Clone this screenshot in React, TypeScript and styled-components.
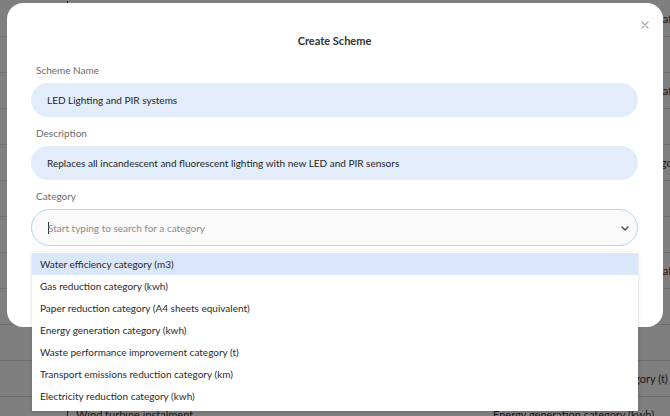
import React from "react";
import styled, { createGlobalStyle } from "styled-components";

const GlobalStyle = createGlobalStyle`
  html, body {
    margin: 0;
    padding: 0;
  }
  body {
    font-family: Lato, "Open Sans", sans-serif;
    background: #fff;
    overflow: hidden;
  }
`;

const Page = styled.div`
  position: relative;
  width: 670px;
  height: 416px;
  overflow: hidden;
  background: #fff;
`;

const Table = styled.div`
  display: flex;
  flex-direction: column;
  padding-top: 1px;
`;

const TableRow = styled.div`
  box-sizing: border-box;
  height: 36px;
  border-bottom: 1px solid #dcdcdc;
  display: grid;
  grid-template-columns: 68px 425px 1fr;
  align-items: center;
  font-size: 11px;
  color: #333;
  white-space: nowrap;
`;

const Gutter = styled.div`
  align-self: stretch;
  border-right: 1px solid #444;
`;

const Cell = styled.div`
  padding-left: 8px;
  overflow: hidden;
`;

const RightCell = styled.div`
  overflow: visible;
`;

const Backdrop = styled.div`
  position: absolute;
  inset: 0;
  background: rgba(0, 0, 0, 0.5);
`;

const Modal = styled.div`
  position: absolute;
  left: 7px;
  top: 3px;
  width: 656px;
  height: 324px;
  box-sizing: border-box;
  padding: 31px 25px 0 24px;
  background: #fff;
  border-radius: 16px;
`;

const Title = styled.div`
  text-align: center;
  font-size: 11px;
  line-height: 14px;
  font-weight: 700;
  color: #333;
  margin-bottom: 15px;
`;

const Close = styled.button`
  position: absolute;
  top: 17px;
  right: 13px;
  width: 10px;
  height: 10px;
  padding: 0;
  border: none;
  background: none;
  display: flex;
  align-items: center;
  justify-content: center;
`;

const Form = styled.div`
  display: flex;
  flex-direction: column;
  gap: 9px;
`;

const Field = styled.div`
  position: relative;
  display: flex;
  flex-direction: column;
`;

const Label = styled.div`
  font-size: 10px;
  line-height: 14px;
  color: #6b6b6b;
  margin: 0 0 6px 5px;
`;

const Input = styled.div`
  box-sizing: border-box;
  height: 34px;
  border-radius: 17px;
  background: #e2ecfb;
  padding-left: 16px;
  display: flex;
  align-items: center;
  font-size: 10px;
  color: #1f1f1f;
`;

const Select = styled.div`
  position: relative;
  box-sizing: border-box;
  height: 37px;
  border: 1px solid #a9dbe9;
  border-radius: 19px;
  background: #fafafa;
  padding: 0 30px 0 16px;
  display: flex;
  align-items: center;
  font-size: 10px;
  color: #8c8c8c;
`;

const Caret = styled.span`
  display: inline-block;
  width: 1px;
  height: 12px;
  background: #333;
  margin-right: -1px;
  vertical-align: middle;
`;

const Chevron = styled.svg`
  position: absolute;
  right: 8px;
  top: 16px;
`;

const Menu = styled.div`
  position: absolute;
  top: calc(100% + 6px);
  left: 1px;
  right: 0;
  padding: 1px 0 4px;
  background: #fff;
  box-shadow: 0 1px 4px rgba(0, 0, 0, 0.16);
  display: flex;
  flex-direction: column;
  z-index: 2;
`;

const Option = styled.div<{ $active?: boolean }>`
  height: 22px;
  padding-left: 8px;
  display: flex;
  align-items: center;
  font-size: 10px;
  color: #2a2a2a;
  background: ${(p) => (p.$active ? "#dae6fa" : "#fff")};
`;

const categories = [
  "Water efficiency category (m3)",
  "Gas reduction category (kwh)",
  "Paper reduction category (A4 sheets equivalent)",
  "Energy generation category (kwh)",
  "Waste performance improvement category (t)",
  "Transport emissions reduction category (km)",
  "Electricity reduction category (kwh)",
];

// table behind the dialog; only its right edge and last row show
const rows: { id: number; name: string; category: string }[] = [
  { id: 0, name: "", category: "Waste performance improvement category (t)" },
  { id: 1, name: "", category: "" },
  { id: 2, name: "", category: "Waste performance improvement category (t)" },
  { id: 3, name: "", category: "" },
  { id: 4, name: "", category: "Transport emissions reduction category (km)" },
  { id: 5, name: "", category: "" },
  { id: 6, name: "", category: "" },
  { id: 7, name: "", category: "Waste performance improvement category (t)" },
  { id: 8, name: "", category: "" },
  { id: 9, name: "", category: "" },
  { id: 10, name: "", category: "General waste reduction category (t)" },
  { id: 11, name: "Wind turbine instalment", category: "Energy generation category (kwh)" },
];

export default function App() {
  return (
    <Page>
      <GlobalStyle />
      <Table>
        {rows.map((row) => (
          <TableRow key={row.id}>
            <Gutter />
            <Cell>{row.name}</Cell>
            <RightCell>{row.category}</RightCell>
          </TableRow>
        ))}
      </Table>
      <Backdrop />
      <Modal>
        <Title>Create Scheme</Title>
        <Close aria-label="Close">
          <svg width="8" height="8" viewBox="0 0 8 8">
            <path d="M1 1L7 7M7 1L1 7" stroke="#a9a9a9" strokeWidth="1.4" strokeLinecap="round" />
          </svg>
        </Close>
        <Form>
          <Field>
            <Label>Scheme Name</Label>
            <Input>LED Lighting and PIR systems</Input>
          </Field>
          <Field>
            <Label>Description</Label>
            <Input>Replaces all incandescent and fluorescent lighting with new LED and PIR sensors</Input>
          </Field>
          <Field>
            <Label>Category</Label>
            <Select>
              <Caret />
              Start typing to search for a category
              <Chevron width="8" height="5" viewBox="0 0 8 5">
                <path d="M1 1L4 4L7 1" fill="none" stroke="#444" strokeWidth="1.3" strokeLinecap="round" strokeLinejoin="round" />
              </Chevron>
            </Select>
            <Menu>
              {categories.map((c, i) => (
                <Option key={c} $active={i === 0}>
                  {c}
                </Option>
              ))}
            </Menu>
          </Field>
        </Form>
      </Modal>
    </Page>
  );
}
